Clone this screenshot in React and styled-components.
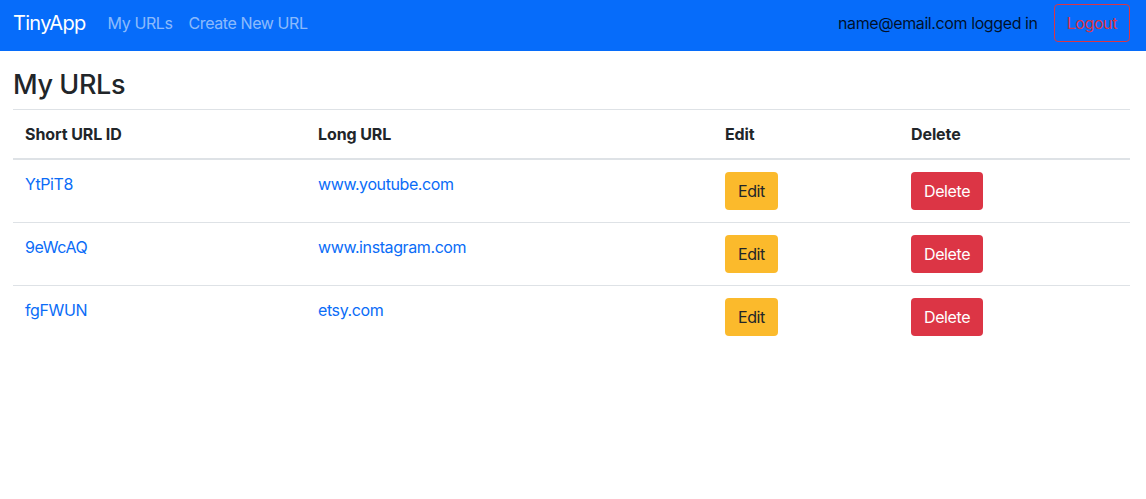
import styled, { createGlobalStyle } from "styled-components"

const GlobalStyle = createGlobalStyle`
  body {
    margin: 0;
    font-family: "Inter", "Liberation Sans", sans-serif;
    font-size: 16px;
    line-height: 1.5;
    letter-spacing: -0.4px;
    color: #212529;
    background: #fff;
  }
`

const urls = [
    { id: "YtPiT8", long: "www.youtube.com" },
    { id: "9eWcAQ", long: "www.instagram.com" },
    { id: "fgFWUN", long: "etsy.com" },
]

const App = () => {
    return (
        <>
            <GlobalStyle />
            <Navbar>
                <Brand href="#">TinyApp</Brand>
                <NavLinks>
                    <NavLink href="#">My URLs</NavLink>
                    <NavLink href="#">Create New URL</NavLink>
                </NavLinks>
                <UserArea>
                    <UserText>name@email.com logged in</UserText>
                    <LogoutButton>Logout</LogoutButton>
                </UserArea>
            </Navbar>
            <Main>
                <Title>My URLs</Title>
                <Table>
                    <thead>
                        <tr>
                            <Th $w={293}>Short URL ID</Th>
                            <Th $w={407}>Long URL</Th>
                            <Th $w={186}>Edit</Th>
                            <Th>Delete</Th>
                        </tr>
                    </thead>
                    <tbody>
                        {urls.map((u) => (
                            <tr key={u.id}>
                                <Td><Link href="#">{u.id}</Link></Td>
                                <Td><Link href="#">{u.long}</Link></Td>
                                <Td><Button $variant="warning">Edit</Button></Td>
                                <Td><Button $variant="danger">Delete</Button></Td>
                            </tr>
                        ))}
                    </tbody>
                </Table>
            </Main>
        </>
    )
}

const Navbar = styled.nav`
    display: flex;
    align-items: center;
    height: 51px;
    padding: 0 16px 0 13px;
    background: #066cfa;
    box-sizing: border-box;
`

const Brand = styled.a`
    font-size: 20px;
    letter-spacing: -0.7px;
    color: #fff;
    text-decoration: none;
    margin-right: 22px;
    margin-top: -6px;
`

const NavLinks = styled.div`
    display: flex;
    gap: 16px;
    margin-top: -6px;
`

const NavLink = styled.a`
    font-size: 16px;
    color: rgba(255, 255, 255, 0.55);
    text-decoration: none;
`

const UserArea = styled.div`
    margin-left: auto;
    display: flex;
    align-items: center;
    gap: 16px;
    margin-top: -6px;
`

const UserText = styled.span`
    color: rgba(0, 0, 0, 0.85);
`

const LogoutButton = styled.button`
    font-family: inherit;
    font-size: 16px;
    letter-spacing: inherit;
    line-height: 24px;
    height: 38px;
    padding: 6px 12px;
    color: #dc3545;
    background: transparent;
    border: 1px solid #dc3545;
    border-radius: 4px;
`

const Main = styled.main`
    padding: 0 16px 0 13px;
`

const Title = styled.h3`
    font-size: 27px;
    font-weight: 500;
    line-height: 1.2;
    margin: 18px 0 8px;
`

const Table = styled.table`
    width: 100%;
    border-collapse: collapse;
    border-top: 1px solid #dee2e6;
`

const Th = styled.th`
    text-align: left;
    font-weight: 700;
    letter-spacing: -0.1px;
    padding: 12px;
    width: ${(p) => (p.$w ? `${p.$w}px` : "auto")};
    border-bottom: 2px solid #dee2e6;
    box-sizing: border-box;
`

const Td = styled.td`
    padding: 12px;
    vertical-align: top;
    border-bottom: 1px solid #dee2e6;
    tr:last-child > & {
        border-bottom: none;
    }
`

const Link = styled.a`
    color: #0a6cf7;
    text-decoration: none;
`

const Button = styled.button`
    font-family: inherit;
    font-size: 16px;
    letter-spacing: inherit;
    line-height: 24px;
    height: 38px;
    padding: 6px 12px;
    border: 1px solid transparent;
    border-radius: 4px;
    background: ${(p) => (p.$variant === "danger" ? "#dc3545" : "#fbba2c")};
    color: ${(p) => (p.$variant === "danger" ? "#fff" : "#212529")};
`

export default App
